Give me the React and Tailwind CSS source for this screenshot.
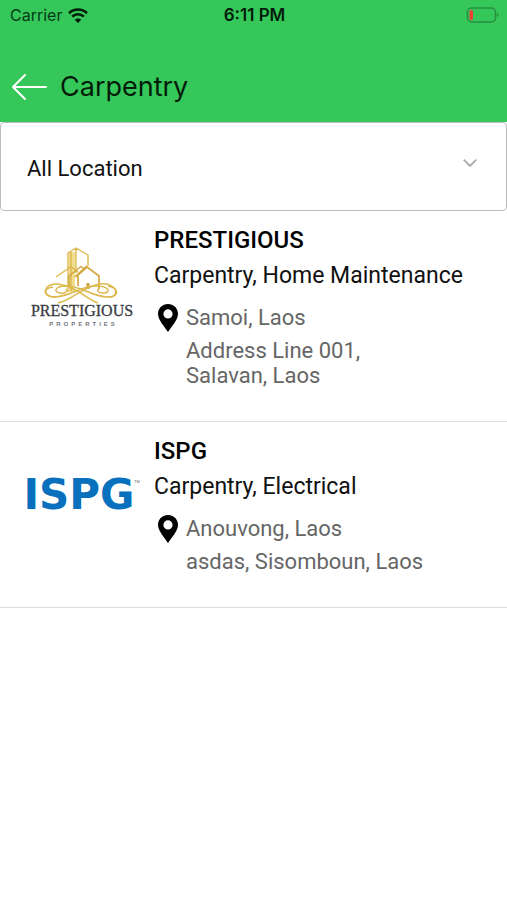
const providers = [
  {
    name: "PRESTIGIOUS",
    services: "Carpentry, Home Maintenance",
    area: "Samoi, Laos",
    address: "Address Line 001, Salavan, Laos",
    Logo: PrestigiousLogo,
  },
  {
    name: "ISPG",
    services: "Carpentry, Electrical",
    area: "Anouvong, Laos",
    address: "asdas, Sisomboun, Laos",
    Logo: IspgLogo,
  },
];

function PrestigiousLogo() {
  return (
    <svg viewBox="0 2 140 130" className="h-[130px] w-[140px]" role="img" aria-label="Prestigious Properties">
      <g fill="none" stroke="#dcb84c" strokeWidth="1.400" strokeLinejoin="round">
        <path d="M62 32V72" strokeWidth="6" stroke="#f0dd90" />
        <path d="M58 72V33L66 28L78 35V46M66 28V53" />
        <path d="M61 32V71" />
        <path d="M46 57L61 46.500L68 52" />
        <path d="M59 66V56L71 46.500L74 49" stroke="#cda43a" />
        <path d="M68 66V55L77 47L89 56V69M65 57L77 46" stroke="#d3aa40" strokeWidth="1.700" />
        <path d="M78 69V63" strokeWidth="3" stroke="#cda43a" />
        <path d="M48 83C62 80 72 67 90 64C106 62 112 77 98 77C82 77 72 66 56 66C45 66 43 72 50 73C55 74 59 71 56 69" />
        <path d="M88 83C76 79 68 67 48 64C32 63 32 77 44 77C60 77 70 66 86 66C99 66 102 73 93 73C88 73 86 70 89 69" />
        <path d="M43 67C31 68 34 78 46 77M98 66C109 68 110 77 98 77" />
      </g>
      <text x="72" y="96" textAnchor="middle" fontFamily="Liberation Serif, serif" fontSize="16" fill="#393d44" stroke="#393d44" strokeWidth="0.300">PRESTIGIOUS</text>
      <text x="72" y="106" textAnchor="middle" fontFamily="Liberation Sans, sans-serif" fontSize="6" fontWeight="700" fill="#77777c">{"P\u2002R\u2002O\u2002P\u2002E\u2002R\u2002T\u2002I\u2002E\u2002S"}</text>
    </svg>
  );
}

function IspgLogo() {
  return (
    <svg viewBox="0 0 140 130" className="h-[130px] w-[140px]" role="img" aria-label="ISPG">
      <text x="69" y="76" textAnchor="middle" fontFamily="DejaVu Sans, sans-serif" fontSize="42" fontWeight="700" fill="#0870bc">ISPG</text>
      <text x="124" y="50" fontFamily="Liberation Sans, sans-serif" fontSize="4" fill="#666">TM</text>
    </svg>
  );
}

function Pin() {
  return (
    <svg viewBox="0 0 20 28" className="h-7 w-5 shrink-0" aria-hidden="true">
      <path fillRule="evenodd" fill="#000" d="M10 0C4.400 0 0 4.300 0 9.900C0 16 7 23 10 28C13 23 20 16 20 9.900C20 4.300 15.600 0 10 0ZM10 5.300A4.600 4.600 0 1 1 10 14.500A4.600 4.600 0 1 1 10 5.300Z" />
    </svg>
  );
}

function StatusBar() {
  return (
    <div className="grid h-[30px] grid-cols-3 items-center pr-2 pl-[10px] font-[Inter,sans-serif] text-[16px] text-[#063b16]">
      <div className="flex items-center gap-[6px]">
        <span>Carrier</span>
        <svg viewBox="0 0 20 15" className="h-[15px] w-5" fill="none" stroke="#031b09" aria-label="Wi-Fi">
          <path d="M1 5.200C6 .3 14 .3 19 5.200" strokeWidth="2.600" />
          <path d="M4.200 8.600C7.500 5.300 12.500 5.300 15.800 8.600" strokeWidth="2.500" />
          <path d="M10 15L6.800 11.700C8.600 10 11.400 10 13.200 11.700Z" fill="#031b09" stroke="none" />
        </svg>
      </div>
      <span className="text-center text-[17px] leading-7 font-semibold text-[#031b09]">6:11 PM</span>
      <svg viewBox="0 0 33 16" className="h-4 w-[33px] justify-self-end" aria-label="Battery low">
        <rect x="1.500" y="1" width="28" height="14" rx="4" fill="none" stroke="#278f43" strokeWidth="1.500" />
        <rect x="3.500" y="3" width="3.500" height="10" rx="1.500" fill="#ef4136" />
        <path d="M31 6C33 6.500 33 9.500 31 10Z" fill="#278f43" />
      </svg>
    </div>
  );
}

export default function App() {
  return (
    <div className="min-h-screen bg-white font-[Roboto,sans-serif] text-black">
      <header className="bg-[#35c759]">
        <StatusBar />
        <div className="flex h-[92px] items-center gap-3 px-3 pt-[22px]">
          <button type="button" aria-label="Back">
            <svg viewBox="0 0 36 28" className="h-7 w-9" fill="none" stroke="#fff" strokeWidth="2" strokeLinecap="round" strokeLinejoin="round">
              <path d="M34 14H1M13 2L1 14L13 26" />
            </svg>
          </button>
          <h1 className="font-[Inter,sans-serif] text-[27px] leading-9 text-[#031b09]">Carpentry</h1>
        </div>
      </header>
      <main>
        <div className="relative">
          <select aria-label="Location" className="block h-[89px] w-full appearance-none rounded border border-[#bbb] bg-white pt-1 pr-12 pl-[26px] text-[22px] text-[#111]">
            <option>All Location</option>
          </select>
          <svg viewBox="0 0 14 8" className="pointer-events-none absolute top-[37px] right-[30px] h-2 w-[14px]" fill="none" stroke="#aaa" strokeWidth="1.800" aria-hidden="true">
            <path d="M.7.7L7 7L13.300.7" />
          </svg>
        </div>
        <ul>
          {providers.map(({ name, services, area, address, Logo }) => (
            <li key={name} className="flex items-start border-b border-[#ddd] pt-[11px] pb-[33px] pl-[10px]">
              <div className="w-36 shrink-0">
                <Logo />
              </div>
              <div className="min-w-0 flex-1">
                <h2 className="text-[24px] leading-9 font-medium">{name}</h2>
                <p className="text-[23px] leading-9 text-[#111]">{services}</p>
                <div className="flex items-center gap-2 pt-1 pl-1">
                  <Pin />
                  <p className="text-[22px] leading-10 text-[#666]">{area}</p>
                </div>
                <p className="w-full max-w-[272px] pl-8 text-[22px] leading-[25px] text-[#666]">{address}</p>
              </div>
            </li>
          ))}
        </ul>
      </main>
    </div>
  );
}
